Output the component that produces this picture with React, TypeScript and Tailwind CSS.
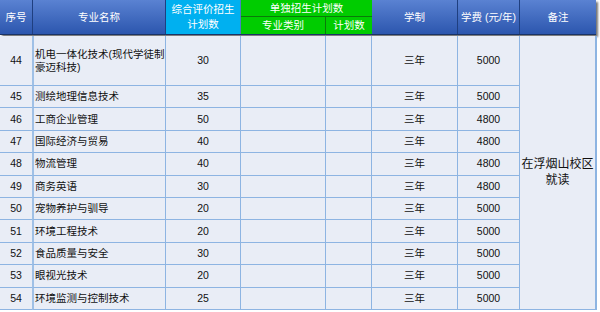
const rows: [string, string, string, string, string][] = [
  ["45", "测绘地理信息技术", "35", "三年", "5000"],
  ["46", "工商企业管理", "50", "三年", "4800"],
  ["47", "国际经济与贸易", "40", "三年", "4800"],
  ["48", "物流管理", "40", "三年", "4800"],
  ["49", "商务英语", "30", "三年", "4800"],
  ["50", "宠物养护与驯导", "20", "三年", "5000"],
  ["51", "环境工程技术", "20", "三年", "5000"],
  ["52", "食品质量与安全", "30", "三年", "5000"],
  ["53", "眼视光技术", "20", "三年", "5000"],
  ["54", "环境监测与控制技术", "25", "三年", "5000"],
];

const cell = "border-r border-b border-[#8db4e2] flex items-center whitespace-nowrap";
const blueHead =
  "bg-gradient-to-b from-[#5a82d2] to-[#2c56ae] border-r border-[#1f3f80] flex items-center justify-center row-span-2 whitespace-nowrap";

export default function App() {
  return (
    <div
      className="w-[600px] h-[312px] bg-white text-[10.5px] leading-[13px] text-[#111]"
      style={{ fontFamily: '"Liberation Sans", "Noto Sans CJK SC", sans-serif' }}
    >
      <div className="w-[596px] grid grid-cols-[33px_133px_75px_85px_46px_86px_62px_76px] grid-rows-[17px_17px] border-b border-[#1a3366] text-white shadow-[2px_2px_2px_rgba(0,0,0,0.55)]">
        <div className={blueHead}>序号</div>
        <div className={blueHead}>专业名称</div>
        <div className="row-span-2 bg-[#00b0f0] border-r border-[#4a7fc0] flex flex-col items-center justify-center leading-[15px]">
          <span>综合评价招生</span>
          <span>计划数</span>
        </div>
        <div className="col-span-2 bg-[#00cc00] border-b border-[#0a7a0a] flex items-center justify-center">
          单独招生计划数
        </div>
        <div className={blueHead}>学制</div>
        <div className={blueHead}>学费 (元/年)</div>
        <div className={blueHead + " border-r-0"}>备注</div>
        <div className="bg-[#00cc00] border-r border-[#0a7a0a] flex items-center justify-center">
          专业类别
        </div>
        <div className="bg-[#00cc00] flex items-center justify-center">计划数</div>
      </div>
      <div className="mt-[1px] w-[597px] grid grid-cols-[33px_133px_75px_85px_46px_86px_62px_77px] grid-rows-[50px_repeat(10,22.4px)] bg-[#e9edf6]">
        <div className={cell + " justify-center"}>44</div>
        <div className={cell + " pl-[1px] border-l-2 border-l-[#9fc0e6] -ml-[1px]"}>
          机电一体化技术(现代学徒制
          <br />
          豪迈科技)
        </div>
        <div className={cell + " justify-center"}>30</div>
        <div className={cell}></div>
        <div className={cell}></div>
        <div className={cell + " justify-center"}>三年</div>
        <div className={cell + " justify-center"}>5000</div>
        <div className="row-span-11 border-r-2 border-b border-[#8db4e2] flex items-center justify-center text-center text-[12px] leading-[16px] whitespace-nowrap">
          在浮烟山校区
          <br />
          就读
        </div>
        {rows.map(([no, name, n, years, fee]) => (
          <div key={no} className="contents">
            <div className={cell + " justify-center"}>{no}</div>
            <div className={cell + " pl-[1px] border-l-2 border-l-[#9fc0e6] -ml-[1px]"}>{name}</div>
            <div className={cell + " justify-center"}>{n}</div>
            <div className={cell}></div>
            <div className={cell}></div>
            <div className={cell + " justify-center"}>{years}</div>
            <div className={cell + " justify-center"}>{fee}</div>
          </div>
        ))}
      </div>
    </div>
  );
}
